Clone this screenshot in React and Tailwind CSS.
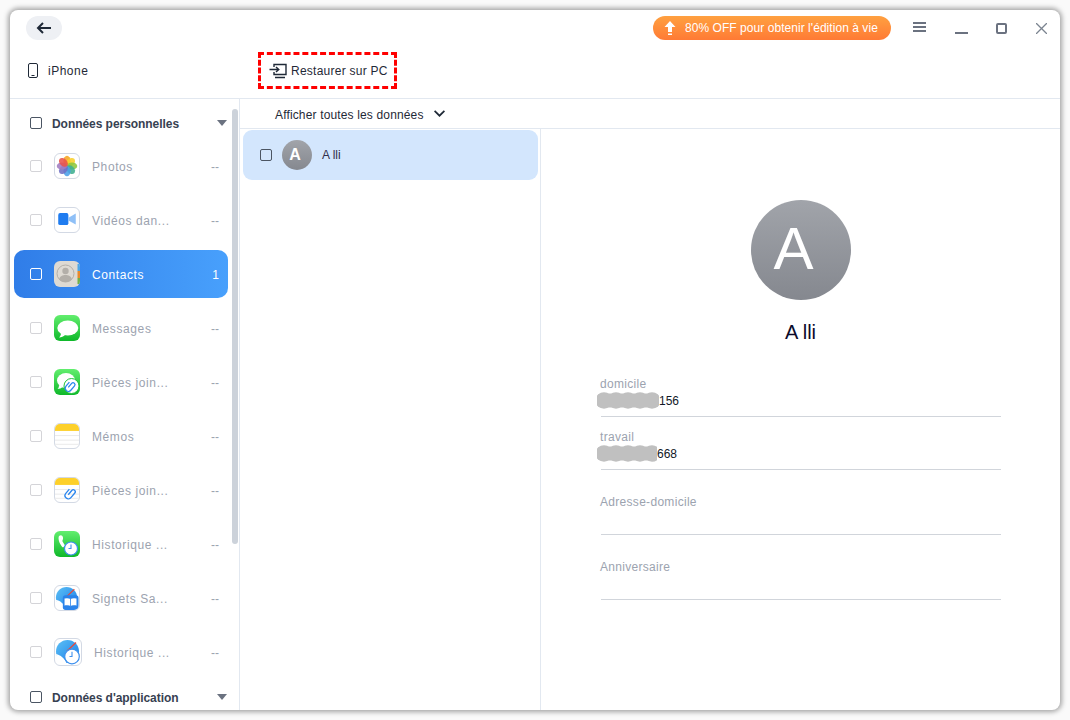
import React from 'react';

const Frame = ({ children, size = 'w-[26px] h-[26px]' }) => (
  <div className={`${size} shrink-0 rounded-[6px] border border-[#d3d9e4] bg-white overflow-hidden`}>{children}</div>
);

const PhotosIcon = () => (
  <Frame>
    <svg viewBox="0 0 26 26" className="w-full h-full">
      {[
        ['#f5a623', 0], ['#f8d02c', 45], ['#8cc63f', 90], ['#3fae8f', 135],
        ['#4a9fe8', 180], ['#6f6fc4', 225], ['#a07cc0', 270], ['#e8534a', 315],
      ].map(([c, a]) => (
        <ellipse key={a} cx="13" cy="7.5" rx="3.9" ry="5.6" fill={c} fillOpacity="0.88" transform={`rotate(${a} 13 13)`} />
      ))}
    </svg>
  </Frame>
);

const VideoIcon = () => (
  <Frame>
    <svg viewBox="0 0 26 26" className="w-full h-full">
      <rect x="3.500" y="5.500" width="11" height="13" rx="2" fill="#1f7cf0" />
      <path d="M14.500 10.500L22.500 6v12l-8-4.500z" fill="#8fc0f7" />
    </svg>
  </Frame>
);

const ContactsIcon = () => (
  <div className="w-[26px] h-[26px] shrink-0 rounded-[6px] overflow-hidden">
    <svg viewBox="0 0 26 26" className="w-full h-full">
      <rect width="26" height="26" fill="#dedad3" />
      <rect x="23.500" y="3" width="2.500" height="7" fill="#4aa5e8" />
      <rect x="23.500" y="10" width="2.500" height="7" fill="#e8892b" />
      <rect x="23.500" y="17" width="2.500" height="6" fill="#6fb04a" />
      <circle cx="11.500" cy="12.500" r="8.500" fill="none" stroke="#b3afa9" strokeWidth="1" />
      <circle cx="11.500" cy="10" r="3.200" fill="#b3afa9" />
      <path d="M5 18.500c1-3.500 3.500-4.500 6.500-4.500s5.500 1 6.500 4.500c-2 2-4 2.500-6.500 2.500s-4.500-.5-6.500-2.500z" fill="#b3afa9" />
    </svg>
  </div>
);

const greenBg = (id) => (
  <defs>
    <linearGradient id={id} x1="0" y1="0" x2="0" y2="1">
      <stop offset="0" stopColor="#62ee6e" />
      <stop offset="1" stopColor="#0fb82a" />
    </linearGradient>
  </defs>
);

const Clip = ({ x, y, s = 1 }) => (
  <g transform={`translate(${x} ${y}) scale(${s}) rotate(40)`} fill="none" stroke="#2b86ee" strokeWidth="1.200">
    <path d="M-1.500 3v-5a1.800 1.800 0 0 1 3.600 0v5.500a3 3 0 0 1-6 0v-5" />
  </g>
);

const Clock = ({ x, y, r = 6 }) => (
  <g>
    <circle cx={x} cy={y} r={r} fill="#fff" stroke="#3d90ee" strokeWidth="1.200" />
    <path d={`M${x} ${y - r + 2.500}v${r - 2.500}h-2.500`} fill="none" stroke="#3d90ee" strokeWidth="1.100" />
  </g>
);

const MessagesIcon = () => (
  <div className="w-[26px] h-[26px] shrink-0 rounded-[6px] overflow-hidden">
    <svg viewBox="0 0 26 26" className="w-full h-full">
      {greenBg('g1')}
      <rect width="26" height="26" fill="url(#g1)" />
      <ellipse cx="13.800" cy="13" rx="10.500" ry="7.600" fill="#fff" />
      <path d="M7 18c0 2-1 3.500-2 4.500 2.500 0 4.500-1 6-2.500z" fill="#fff" />
    </svg>
  </div>
);

const AttachMsgIcon = () => (
  <div className="w-[26px] h-[26px] shrink-0 rounded-[6px] overflow-hidden">
    <svg viewBox="0 0 26 26" className="w-full h-full">
      {greenBg('g2')}
      <rect width="26" height="26" fill="url(#g2)" />
      <ellipse cx="12" cy="11.500" rx="9" ry="7.500" fill="#fff" />
      <path d="M5 16c0 2-.5 3-1.500 4 2 0 4-1 5-2z" fill="#fff" />
      <circle cx="17.500" cy="17" r="7.500" fill="#fff" stroke="#1cc23a" strokeWidth="1" />
      <Clip x={17.500} y={17} s={1.050} />
    </svg>
  </div>
);

const NotesBase = ({ children }) => (
  <Frame>
    <svg viewBox="0 0 26 26" className="w-full h-full">
      <rect width="26" height="7.500" fill="#fdd02a" />
      <path d="M0 12.500h26M0 17.500h26M0 22h26" stroke="#e8e8e8" strokeWidth="1" />
      {children}
    </svg>
  </Frame>
);

const HistoryCallIcon = () => (
  <div className="w-[26px] h-[26px] shrink-0 rounded-[6px] overflow-hidden">
    <svg viewBox="0 0 26 26" className="w-full h-full">
      {greenBg('g3')}
      <rect width="26" height="26" fill="url(#g3)" />
      <path d="M5 5c2-1.500 3.500-.5 4 1.500.5 2-1 2.500-.5 4l2.500 4-2 2C6 14 3.500 8 5 5z" fill="#fff" />
      <Clock x={17} y={17.500} r={6.500} />
    </svg>
  </div>
);

const SafariBase = ({ children, id }) => (
  <svg viewBox="0 0 26 26" className="w-full h-full">
    <defs>
      <linearGradient id={id} x1="0" y1="0" x2="1" y2="1">
        <stop offset="0" stopColor="#5cc0f5" />
        <stop offset="1" stopColor="#1a7de8" />
      </linearGradient>
    </defs>
    <circle cx="12.500" cy="12.500" r="11.500" fill={`url(#${id})`} />
    <path d="M21 3.500l-9 8.500" stroke="#e8483a" strokeWidth="1.200" />
    <path d="M1 15c4.500 1 8.500 4 11 10H3z" fill="#fff" />
    {children}
  </svg>
);

const SafariBookIcon = () => (
  <Frame>
    <SafariBase id="s1">
      <rect x="8.500" y="10" width="17" height="16" rx="3" fill="#2a83ea" />
      <path d="M10 13.500c2.700-.8 5.300-.6 6.800.5v8c-1.500-1-4.100-1.200-6.800-.5zM23.600 13.500c-2.700-.8-5.300-.6-6.800.5v8c1.500-1 4.100-1.200 6.800-.5z" fill="#fff" stroke="#2a83ea" strokeWidth=".6" />
    </SafariBase>
  </Frame>
);

const SafariClockIcon = () => (
  <Frame size="w-[28px] h-[28px]">
    <SafariBase id="s2">
      <Clock x={17} y={17.500} r={7.300} />
    </SafariBase>
  </Frame>
);

const rows = [
  { name: 'Photos', icon: <PhotosIcon /> },
  { name: 'Vidéos dan...', icon: <VideoIcon /> },
  { name: 'Contacts', icon: <ContactsIcon />, count: '1', active: true },
  { name: 'Messages', icon: <MessagesIcon /> },
  { name: 'Pièces join...', icon: <AttachMsgIcon /> },
  { name: 'Mémos', icon: <NotesBase /> },
  { name: 'Pièces join...', icon: <NotesBase><Clip x={18} y={16.500} s={1.200} /></NotesBase> },
  { name: 'Historique ...', icon: <HistoryCallIcon /> },
  { name: 'Signets Sa...', icon: <SafariBookIcon /> },
  { name: 'Historique ...', icon: <SafariClockIcon /> },
];

const SectionHeader = ({ label }) => (
  <div className="flex items-center h-6 pl-5 pr-[5px]">
    <span className="w-3 h-3 shrink-0 rounded-[2px] border border-[#4b5563]" />
    <span className="ml-2.5 mt-[2px] flex-1 text-xs font-bold text-[#374151] tracking-[-0.05px]">{label}</span>
    <svg width="10" height="6" viewBox="0 0 10 6"><path d="M0 0h10L5 6z" fill="#6b7280" /></svg>
  </div>
);

const SideRow = ({ name, icon, count, active }) => (
  <div className={`flex items-center h-12 w-[214px] ml-1 pl-4 pr-[9px] rounded-[10px] ${active ? 'bg-gradient-to-r from-[#307de8] to-[#48a0fc]' : ''}`}>
    <span className={`w-3 h-3 shrink-0 rounded-[2px] border ${active ? 'border-white' : 'border-[#d4d4d8]'}`} />
    <div className="ml-3 flex items-center gap-3 flex-1 min-w-0">
      {icon}
      <span className={`mt-[2px] text-xs tracking-[0.6px] ${active ? 'text-white' : 'text-[#9ca3af]'}`}>{name}</span>
    </div>
    <span className={`mt-[2px] text-xs ${active ? 'text-white' : 'text-[#9ca3af]'}`}>{count || '--'}</span>
  </div>
);

const Blob = ({ width }) => (
  <svg width={width} height="17" viewBox={`0 0 ${width} 17`} className="shrink-0">
    <rect x="0" y="1.500" width={width} height="14" rx="4" fill="#c0c0c0" />
    {[0, 1, 2, 3, 4].map((i) => (
      <circle key={i} cx={7 + i * 12} cy="8.500" r="8.300" fill="#c0c0c0" />
    ))}
  </svg>
);

const Field = ({ label, value, blob, className }) => (
  <div className={`border-b border-[#d1d5db] ${className}`}>
    <div className="-ml-px text-xs leading-4 text-[#9ca3af] tracking-[0.3px]">{label}</div>
    {value && (
      <div className="flex items-center -ml-1 h-[17px] text-xs text-[#111827]">
        <Blob width={blob} />
        <span>{value}</span>
      </div>
    )}
  </div>
);

export default function App() {
  return (
    <div className="w-[1070px] h-[720px] p-2.5 bg-[#fafafa] overflow-hidden font-['Liberation_Sans',Arial,sans-serif]">
      <div className="w-[1050px] h-[700px] flex flex-col bg-white rounded-lg overflow-hidden shadow-[0_0_5px_2px_rgba(0,0,0,0.35)]">
        {/* Title bar */}
        <header className="h-[89px] shrink-0 border-b border-[#e2e8f0] flex flex-col">
          <div className="flex items-center h-6 mt-1.5 pl-4">
            <button className="w-9 h-6 rounded-full bg-[#eef0f4] flex items-center justify-center">
              <svg width="16" height="12" viewBox="0 0 16 12" fill="none" stroke="#1f2937" strokeWidth="2">
                <path d="M15 6H2M7 1L2 6l5 5" />
              </svg>
            </button>
            <div className="ml-auto w-[238px] h-6 rounded-full bg-gradient-to-b from-[#ffa040] to-[#ff7a35] flex items-center pl-[11px] text-xs text-white tracking-[0.05px]">
              <svg width="12" height="14" viewBox="0 0 12 14" fill="#fff">
                <path d="M6 0l5.500 6H8v5H4V6H.5zM4 12.500h4V14H4z" />
              </svg>
              <span className="ml-[9px]">80% OFF pour obtenir l'édition à vie</span>
            </div>
            <svg className="ml-[22px] -mt-[2px]" width="13" height="11" viewBox="0 0 13 11" fill="#6b7280">
              <rect y="0" width="13" height="2" /><rect y="4" width="13" height="2" /><rect y="8" width="13" height="2" />
            </svg>
            <svg className="ml-[29px] mt-2.5" width="13" height="2" viewBox="0 0 13 2"><rect width="13" height="2" fill="#6b7280" /></svg>
            <svg className="ml-[28px]" width="11" height="11" viewBox="0 0 11 11" fill="none"><rect x="1" y="1" width="9" height="9" rx="1" stroke="#6b7280" strokeWidth="2" /></svg>
            <svg className="ml-[29px] mr-[13px]" width="11" height="11" viewBox="0 0 11 11" stroke="#7b8490" strokeWidth="1.300"><path d="M0 0l11 11M11 0L0 11" /></svg>
          </div>
          <div className="flex items-center mt-[13px] -translate-y-px">
            <div className="flex items-center w-[248px] pl-[18px]">
              <svg width="10" height="15" viewBox="0 0 10 15" fill="none" stroke="#1f2937">
                <rect x=".5" y=".5" width="9" height="14" rx="1.500" /><path d="M3.500 12.500h3" />
              </svg>
              <span className="ml-2.5 text-xs text-[#1f2937] tracking-[0.5px]">iPhone</span>
            </div>
            <div className="w-[139px] h-[37px] border-[3px] border-dashed border-[#ff0000] flex items-center pl-2 text-xs text-[#1f2937] tracking-[0.25px]">
              <svg width="18" height="16" viewBox="0 0 18 16" fill="none" stroke="#1f2937" strokeWidth="1.400">
                <path d="M5 4V1.500h12v10H5V9M0.500 6.500h9M7 4l2.800 2.500L7 9M6 14.500h10" />
              </svg>
              <span className="ml-1">Restaurer sur PC</span>
            </div>
          </div>
        </header>

        <div className="flex flex-1 min-h-0">
          {/* Sidebar */}
          <aside className="w-[230px] shrink-0 border-r border-[#e2e8f0] flex overflow-hidden">
            <div className="w-[222px] shrink-0 pt-3">
              <SectionHeader label="Données personnelles" />
              <div className="flex flex-col gap-1.5 mt-[7px]">
                {rows.map((r, i) => <SideRow key={i} {...r} />)}
              </div>
              <div className="mt-[9px]"><SectionHeader label="Données d'application" /></div>
            </div>
            <div className="w-1.5 h-[435px] mt-2.5 rounded-full bg-[#ccd2da]" />
          </aside>

          <div className="flex-1 flex flex-col min-w-0">
            <div className="h-[30px] shrink-0 border-b border-[#e2e8f0] flex items-center pl-[35px] text-xs text-[#1f2937] tracking-[0.15px]">
              <span className="mt-[2px]">Afficher toutes les données</span>
              <svg className="ml-[10px]" width="11" height="7" viewBox="0 0 11 7" fill="none" stroke="#1f2937" strokeWidth="1.700"><path d="M.6.8l4.900 4.900L10.400.8" /></svg>
            </div>
            <div className="flex flex-1 min-h-0">
              {/* Contact list */}
              <div className="w-[301px] shrink-0 border-r border-[#e2e8f0] pt-px pl-[3px]">
                <div className="w-[295px] h-[50px] rounded-[9px] bg-[#d3e6fd] flex items-center pl-[17px]">
                  <span className="w-3 h-3 rounded-[2px] border border-[#4b5563]" />
                  <div className="ml-2.5 w-[30px] h-[30px] pr-1 rounded-full bg-gradient-to-b from-[#a1a4aa] to-[#85888f] flex items-center justify-center text-white text-base font-bold">A</div>
                  <span className="ml-2.5 text-xs text-[#312e4a]">A lli</span>
                </div>
              </div>

              {/* Detail */}
              <div className="flex-1 flex flex-col items-center pt-[71px]">
                <div className="w-[100px] h-[100px] pr-[14px] pb-[2px] rounded-full bg-gradient-to-b from-[#a1a4aa] to-[#85888f] flex items-center justify-center text-white text-[60px] leading-none">A</div>
                <div className="mt-[21px] text-xl leading-[22px] text-[#0b0b2b]">A lli</div>
                <div className="w-[400px] mt-[33px] self-start ml-[60px]">
                  <Field label="domicile" value="156" blob={62} className="h-[41px]" />
                  <Field label="travail" value="668" blob={60} className="h-[53px] pt-3" />
                  <Field label="Adresse-domicile" className="h-[65px] pt-6" />
                  <Field label="Anniversaire" className="h-[65px] pt-6" />
                </div>
              </div>
            </div>
          </div>
        </div>
      </div>
    </div>
  );
}
